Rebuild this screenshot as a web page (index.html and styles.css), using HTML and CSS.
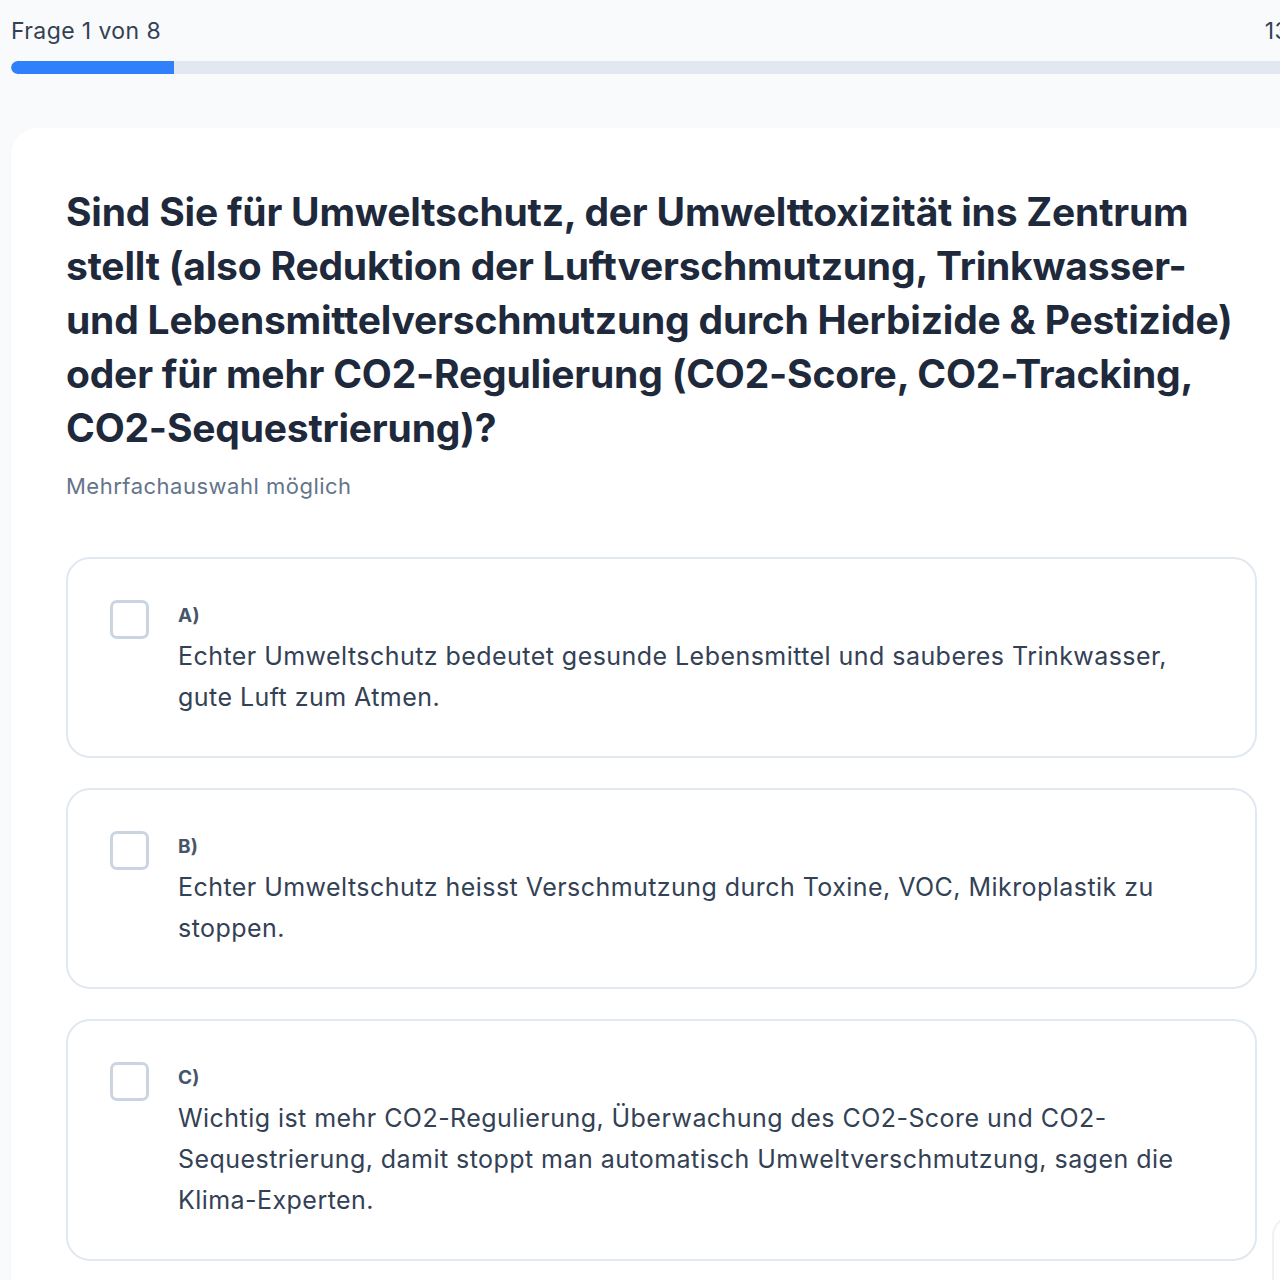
FILE: index.html
```html
<!DOCTYPE html>
<html lang="de">
<head>
<meta charset="utf-8">
<title>Frage 1 von 8</title>
<link rel="stylesheet" href="styles.css">
</head>
<body>
<div class="page">
  <header class="top">
    <div class="top-row">
      <span class="count">Frage 1 von 8</span>
      <span class="percent">13%</span>
    </div>
    <div class="track"><div class="fill" style="width: 12.5%"></div></div>
  </header>

  <main class="card">
    <h1 class="question">Sind Sie für Umweltschutz, der Umwelttoxizität ins Zentrum stellt (also Reduktion der Luftverschmutzung, Trinkwasser- und Lebensmittelverschmutzung durch Herbizide &amp; Pestizide) oder für mehr CO2-Regulierung (CO2-Score, CO2-Tracking, CO2-Sequestrierung)?</h1>
    <p class="hint">Mehrfachauswahl möglich</p>

    <div class="options">
      <label class="option">
        <span class="box"></span>
        <span class="body">
          <span class="letter">A)</span>
          <span class="text">Echter Umweltschutz bedeutet gesunde Lebensmittel und sauberes Trinkwasser, gute Luft zum Atmen.</span>
        </span>
      </label>
      <label class="option">
        <span class="box"></span>
        <span class="body">
          <span class="letter">B)</span>
          <span class="text">Echter Umweltschutz heisst Verschmutzung durch Toxine, VOC, Mikroplastik zu stoppen.</span>
        </span>
      </label>
      <label class="option">
        <span class="box"></span>
        <span class="body">
          <span class="letter">C)</span>
          <span class="text">Wichtig ist mehr CO2-Regulierung, Überwachung des CO2-Score und CO2-Sequestrierung, damit stoppt man automatisch Umweltverschmutzung, sagen die Klima-Experten.</span>
        </span>
      </label>
    </div>
  </main>
  <div class="floating"></div>
</div>
</body>
</html>
```

FILE: styles.css
```css
html, body {
  margin: 0;
  padding: 0;
}
body {
  background: #f8fafc;
  font-family: Inter, "Noto Sans", "Liberation Sans", sans-serif;
  color: #1e293b;
  overflow: hidden;
  height: 1280px;
}
.page {
  position: relative;
  width: 1301px;
  margin-left: 11px;
}
.top {
  padding-top: 15px;
}
.top-row {
  display: flex;
  justify-content: space-between;
  align-items: center;
  font-size: 23px;
  line-height: 32px;
  letter-spacing: 0.4px;
  color: #334155;
}
.track {
  margin-top: 14px;
  height: 13px;
  border-radius: 7px;
  background: #e2e8f0;
  overflow: hidden;
}
.fill {
  height: 100%;
  background: #2f80fa;
  border-radius: 7px 0 0 7px;
}
.card {
  margin-top: 54px;
  background: #ffffff;
  border-radius: 26px;
  box-shadow: 0 1px 3px rgba(15, 23, 42, 0.05);
  padding: 57px 55px 40px 55px;
}
.question {
  margin: 0;
  font-size: 39px;
  line-height: 54px;
  font-weight: 700;
  color: #1e293b;
  letter-spacing: -0.2px;
}
.hint {
  margin: 15px 0 0 0;
  font-size: 22px;
  line-height: 32px;
  letter-spacing: 0.5px;
  color: #64748b;
}
.options {
  margin-top: 55px;
  display: flex;
  flex-direction: column;
  gap: 30px;
}
.option {
  display: flex;
  gap: 29px;
  border: 2px solid #e2e8f0;
  border-radius: 24px;
  padding: 41px 40px 38px 42px;
}
.box {
  flex: none;
  width: 39px;
  height: 39px;
  box-sizing: border-box;
  border: 3px solid #cbd5e1;
  border-radius: 7px;
  background: #fff;
}
.body {
  display: flex;
  flex-direction: column;
  padding-top: 2px;
}
.letter {
  font-size: 19px;
  line-height: 28px;
  font-weight: 700;
  letter-spacing: 0.3px;
  color: #475569;
}
.text {
  margin-top: 6px;
  font-size: 25px;
  line-height: 41px;
  letter-spacing: 0.45px;
  color: #334155;
}
.floating {
  position: absolute;
  left: 1261px;
  top: 1216px;
  width: 80px;
  height: 80px;
  border: 2px solid #eef2f6;
  border-radius: 20px;
  background: #fff;
}
```
